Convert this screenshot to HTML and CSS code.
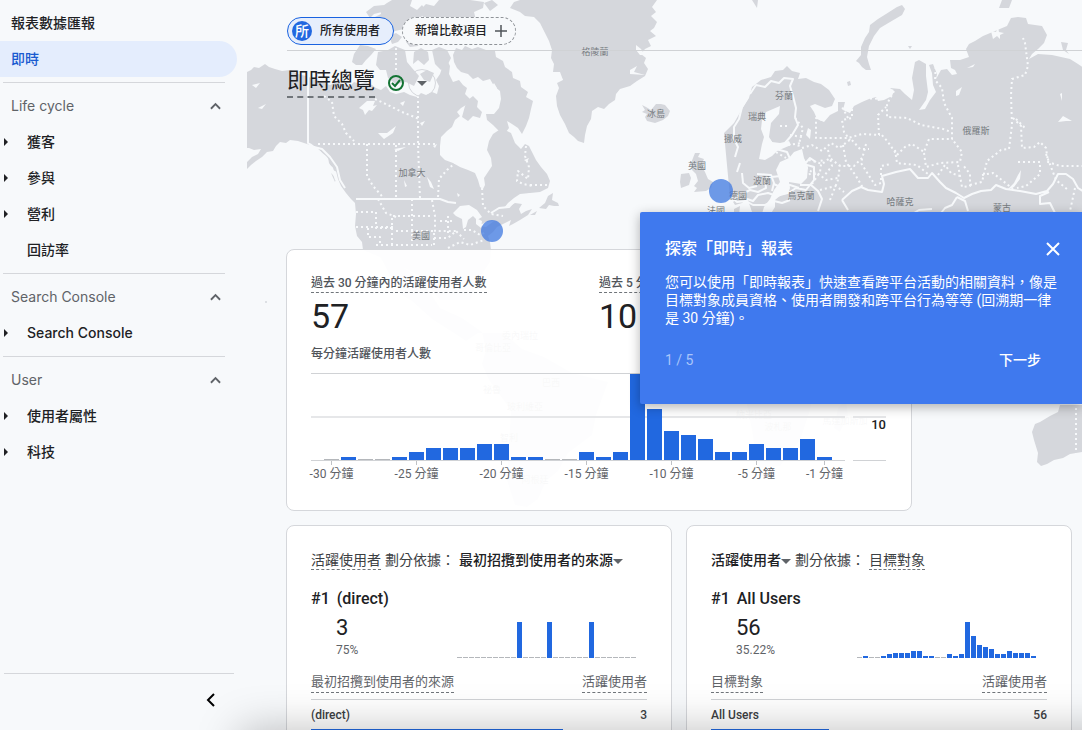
FILE: index.html
```html
<!DOCTYPE html>
<html lang="zh-Hant">
<head>
<meta charset="utf-8">
<meta name="viewport" content="width=device-width, initial-scale=1">
<title>即時總覽</title>
<link rel="stylesheet" href="styles.css">
</head>
<body>
<div class="app">
  <nav class="sidebar" aria-label="報表">
    <a class="nav-item" href="#snapshot">報表數據匯報</a>
    <a class="nav-item nav-item--active" href="#realtime" aria-current="page">即時</a>
    <section class="nav-group">
      <button class="nav-head" type="button">Life cycle <svg class="chevron" viewBox="0 0 12 8"><path d="M1 7 6 2l5 5"/></svg></button>
      <a class="nav-item nav-item--sub" href="#acquisition"><span class="arrow"></span>獲客</a>
      <a class="nav-item nav-item--sub" href="#engagement"><span class="arrow"></span>參與</a>
      <a class="nav-item nav-item--sub" href="#monetization"><span class="arrow"></span>營利</a>
      <a class="nav-item nav-item--sub" href="#retention">回訪率</a>
    </section>
    <section class="nav-group">
      <button class="nav-head" type="button">Search Console <svg class="chevron" viewBox="0 0 12 8"><path d="M1 7 6 2l5 5"/></svg></button>
      <a class="nav-item nav-item--sub" href="#search"><span class="arrow"></span>Search Console</a>
    </section>
    <section class="nav-group">
      <button class="nav-head" type="button">User <svg class="chevron" viewBox="0 0 12 8"><path d="M1 7 6 2l5 5"/></svg></button>
      <a class="nav-item nav-item--sub" href="#attributes"><span class="arrow"></span>使用者屬性</a>
      <a class="nav-item nav-item--sub" href="#tech"><span class="arrow"></span>科技</a>
    </section>
    <div class="nav-foot">
      <button class="collapse" type="button" aria-label="收合"><svg viewBox="0 0 10 14"><path d="M8 1 2 7l6 6"/></svg></button>
    </div>
  </nav>

  <main class="main">
    <svg class="map" viewBox="247 0 835 730" preserveAspectRatio="xMinYMin slice" aria-label="地圖">
      <g class="land">
        <!-- North America -->
        <path d="M247 72L251 70 254 67 259 68 262 66 265 64 269 67 275 69 282 71 290 70 298 74 306 76 314 79 322 82 330 85 337 82 343 84 350 86 354 82 360 84 366 82 372 85 376 88 381 90 386 86 390 92 396 94 404 92 410 95 417 97 421 93 426 95 432 92 437 94 439 86 436 80 440 74 443 65 446 58 450 66 449 74 453 82 459 80 463 85 467 88 465 94 470 99 466 105 461 108 457 112 460 116 455 120 452 127 447 131 441 137 440 146 440 155 445 160 453 163 460 167 468 170 475 173 478 180 480 187 483 189 485 185 484 178 488 172 492 166 491 158 487 150 489 141 493 134 499 130 505 130 511 133 513 138 515 143 518 146 521 149 525 144 529 146 532 152 536 160 541 167 547 174 550 181 548 188 540 192 530 193 520 194 514 198 508 203 504 208 510 206 515 203 522 204 519 209 521 214 526 211 532 209 528 215 520 220 513 224 509 226 511 220 505 223 497 227 493 232 488 236 490 242 491 250 490 262 478 280 470 300 440 300 420 276 392 262 363 250 362 242 357 236 355 226 356 214 355 203 351 199 346 193 341 186 338 179 336 171 331 162 326 156 320 151 314 146 307 144 298 141 290 140 286 143 280 142 276 146 273 151 267 152 262 157 256 161 251 165 247 169 247 162 252 157 258 154 261 149 254 150 249 148 247 148z"/>
        <path d="M346 190L354 196 358 200 354 201 349 196zM328 157L333 164 337 172 333 170 329 163zM331 173L336 178 335 182z"/>
        <!-- Arctic islands -->
        <path d="M360 45L368 46 376 49 371 55 366 60 362 65 356 65 352 62 354 54z"/>
        <path d="M376 65L378 52 388 50 395 46 405 50 407 62 412 68 419 76 414 86 406 82 396 84 388 78 386 70 380 70z"/>
        <path d="M362 28L368 24 373 18 381 14 380 8 387 3 392 0H412L410 6 417 10 422 5 426 11 421 17 422 24 414 27 407 23 404 29 395 31 389 35 382 32 375 34 368 36 360 34z"/>
        <path d="M366 12L374 6 384 5 382 12 374 14 370 18zM389 36L396 33 402 37 398 42 392 44zM378 38L385 37 387 42 380 45z"/>
        <path d="M414 52L421 48 428 52 429 60 424 65 418 60 413 64zM406 42L414 36 420 40 418 46 410 47z"/>
        <path d="M432 50L439 47 447 50 451 58 447 66 441 70 435 64zM420 74L427 70 434 73 430 82 424 80z"/>
        <path d="M418 12L426 4 434 6 439 0H470L484 2 483 8 474 12 476 20 466 25 458 22 450 29 441 25 434 27 429 22zM484 3L492 0 498 5 490 11z"/>
        <path d="M430 34L445 30 458 32 470 29 483 34 489 39 475 42 460 40 448 42 436 40z"/>
        <path d="M453 55L456 48 462 50 465 46 472 49 478 47 486 50 495 51 496 57 503 61 505 67 512 72 513 78 520 81 521 87 528 92 526 97 533 101 531 109 529 118 526 126 522 134 518 128 512 124 507 121 509 128 506 132 499 131 493 125 487 120 486 114 494 114 499 108 501 99 500 91 494 86 490 79 483 81 478 77 473 79 468 74 461 72 457 68 454 62z"/>
        <path d="M465 106L468 100 473 96 478 101 477 107 482 112 480 118 473 116 468 121 462 117z"/>
        <path d="M510 8L514 2 520 0H657L652 7 656 12 651 16 657 22 654 28 650 31 656 36 648 40 651 46 645 49 641 54 646 58 644 63 648 69 645 76 637 81 630 86 620 89 616 94 615 100 609 104 604 109 598 107 592 111 591 119 587 126 585 135 584 143 578 141 574 137 569 133 565 124 560 115 557 106 556 96 559 88 557 83 563 80 560 72 553 72 554 64 551 58 552 50 549 41 545 33 540 23 534 17 525 16 520 12z"/>
        <path d="M539 208L545 203 548 196 553 193 552 200 558 203 559 206 554 206 549 205 546 209zM530 215L537 211 535 215z"/>
        <!-- Europe and Asia -->
        <path d="M642 105l4 2 5 3 5-6 5 0 4 1 5 6-2 5-5 4-8 3-8-2-2-4 2-3-5-2 3-2z"/>
        <path d="M695 153h5l-2 4 6 2-3 6 4 7 3 7 5 3-2 6-5 3-12 1 3-4-3-2 4-5-2-7-4-4-1-7z"/>
        <path d="M681 174l8-1 2 5-2 7-8 3-1-6z"/>
        <path d="M724 133l10-10 8-14 7-11 3-11 9-7 10-3 4-6 8-1 4-4 5 5 8 2-2 6 8-1 8 4 7 2 8 6 6 9-3 7-7 2-10-4-5 2 4 6 3 7 7 3 6-7 8-4 0-9 7 0-2 8 7 3 4-7 8-4 7-3 7-2 2 4 6-1 8-4 2-5-4-3 10 1 5 5 7 6 2-10-2-12 3-16 4-2 7 4 0 12 2 16-2 8-7 10 6-1 5-9 6-8-3-7-1-12-3-8 4-1 4 10-1 5 5-9 6-1 5 6 5-1-2-4-4-2-1-8h10l9-3-3-8 3-5 6-3 8-5 12-5 12-5 4-8 7-1 8 1 2 6 14 2 5 9-3 8-6 6-6 5-3 5 9-5 14 1 18 4 8 5 6 4 5 7 5 6v180H697l1-7-3-4 12-2 1-5 8-1 8-10 5-6 5-2 0-15 6-3-1 9 5 5 10-2 9-2 7-1 5-8 0-7 6-5 7-1 2-6-1-6 12 2 6-6 1-11-4-9-2-9-8 3-5 6-9 4-4 8 4 12-6 8-4 9-6 8-3 10-7 1-4-12-3-8-5 5-7 2-5-8z"/>
        <path class="sea" d="M773 109l7-3-1 8-8 9-2 14 3 5 8 1 9-2 2 4-14 6-5 5-7 4-6-1 3-15 2-7-3-8 1-9 4-8z"/>
        <path d="M1002 0h10l-3 8h-10z"/>
        <path d="M897 7L902 5 905 9 902 15 890 22 880 28 874 36 869 46 867 57 869 64 871 70 866 70 862 67 859 63 856 61 861 55 861 47 865 38 869 32 870 25 878 19 886 14z"/>
        <path d="M752 0h6l-1 8zM847 82l3-1 1 4-3 1zM908 46l4 0-2 3zM1061 42L1068 43 1066 50 1069 54 1063 50z"/>
        <path d="M1082 405H1060L1058 412 1050 416 1040 422 1035 424 1032 432 1034 440 1038 453 1037 462 1041 466 1047 464 1054 460 1063 458 1070 454 1082 452z"/>
        <!-- South America and Africa, under the card -->
        <path d="M376 249L390 275 402 295 412 301 432 319 454 333 466 341 478 333 504 333 522 349 544 357 572 373 608 382 596 415 592 435 568 453 558 471 546 481 538 499 527 507 515 505 507 480 509 445 511 410 489 380 482 364 486 350 482 332 462 318 440 308 422 280z"/>
        <path d="M740 330L830 330 818 370 810 410 800 440 780 466 758 468 752 430 744 390z"/>
        <path d="M838 408l8-8 2 16-8 16-6-4z"/>
      </g>
      <!-- Lakes and inlets -->
      <g class="sea">
        <path d="M359 108l8-7 8 0-2 5 4-1-5 6-3-1-4 5-2-5zM378 133l9 0 9-7-3 7-9 6zM453 213l7-7 9-1 8 5 5 7-5 3-4-4-5 4-2 7-3 2-1-10-6-3zM476 218l6 3-1 7-5-4zM427 177l4 5 3 7-4-2zM488 92l6-9 3 5-1 8-8 3zM394 149l12-2-8 4zM478 226l8-4 8-1-8 6zM386 84l7-1 5 4-8 2zM956 91l6-4-3 8-3 1z"/>
        <path d="M252 85L260 83 256 88zM258 108L266 104 262 109zM420 123L425 121 422 126zM400 103L405 101 403 106zM433 146L437 144 435 148zM524 160L529 158 527 162zM404 180L407 186 405 187zM457 193L460 195 458 197zM636 45L641 49 645 55 640 55 636 50zM630 70L637 66 634 72 645 75 630 74zM553 72L560 75 563 80 555 77z"/>
        <path d="M991 31l5 1 2-5 1 5 5 1-4 2 0 4-3-3-4 3zM1018 175l3-5-1 9-6 8-7 3 7-7zM1060 94l2-1 0 8zM1063 116l9 5-6 0-8 1zM808 128l3 2-1 9-4-4zM967 68l8-4-2 3zM765 145l5-6 3 4-5 6z"/>
      </g>
      <g class="border">
        <path d="M308 74v69l6 4 8 2 8 8 7 10 3 13 5 8M356 199h84l8 3 8 1M491 213l8-5 10-1 8-9 14-4M310 144l10 8 5 10 7 6 4 12"/>
        <path d="M748 97l-6 10-3 12-5 8 0 12 4 8-3 10M750 94l6-9 9 2 6-6 8 2 5-5 9 1-3 7 3 10 3 12-1 9 3 8-6 10-7 8M740 163l-3 9M776 149l11 3 4 9 8 4-1 9-10 6-7-4-10 1-6 2 1 9-8 4-8-2-6 3-8 4-5 6M792 160l10-2 5 7 7 2 0 13-8 10-10-2-6 4-13 4-9-3-10 2-5 6-6-2M742 173l1 10 6 5 8-2M757 174l14 1 3 8-2 8M774 184l6 3 10-2 9 3M803 166l7-8 6 4M713 199l5-3 6 5 7-4 6 5 9-1 7 4 12 0 9-4 8 2 8-3"/>
        <path d="M800 185l11 0 7 6 4 8-4 12M842 200l10-9 9-4 7 3 14 2 2-8-2-8 14-4 14-3 8 9 10 0 4-5 8 9 6 6 10 5 8 5 8-4 9-3 10-1 5-5 10 4 14 2 16 3 11-3 6-7 5-10 8 0 7 5 5 9 8 5M842 200l6 10M957 197l-5 8-7 3-4 5M957 197l8 4 3 10M1049 192l-9 4 0 8 10-1 5 10M932 209l-13 1-5 3"/>
      </g>
      <g class="border border--dotted">
        <path d="M324 96l8 6 2 14 8 8 4 9 8 8M318 144h120M367 144v32l6 10 8 9 3 4M396 145v53M418 91v54l2 53M375 99l15 7 12 6 10 4 7 3M396 48v24M438 197l1-18 8-9 8-7M482 188l1 18 8 8 12 2M526 146l-1 10 4 11-1 12-10-8-1 10 6 3 10 2M378 199l8 14 10 4M356 212h20v16h16v-12h40M368 228v9h12v8M392 228v20M412 199v45M432 200l3 16 0 15h22M356 227h40M396 231h38v14M440 221h14M434 238l14 0 8-7 8 8M376 245h56M448 216v18M464 230l8 0 8 5 6-3M448 248l12-6 10 3 14-5"/>
        <path d="M848 118l-7-13M852 104l8-6 24 1 8-8 2-8M894 91l-7 13 0 13 20 1 14 7 22 4 8 3M936 62l-1 18 7 8 2 15 8 15 0 21h-23l-5 13-12-8-7 3-8 8-9-13-8-9M879 135l-1-20 8-8M852 104l0 14-10 2 2 12 6 8M822 120l-6-2 0 20 32 0 14-4 18 1M802 148l10-3 10 6 9-8 8 5 12-9 9 10 9 0M800 165l10-5 12 4 8-6 10 8 14 0 8-8M843 145l3 17 10 14 7 12M866 144l-5 19 14 22 6-2 0-17 10-2M895 150l2 13 20 2 11 9M924 153l2 14 14-4 20-1 2-10-10-13M938 175l7-10 6 8 12 4M958 165l4 22 8-1 0-12-7-9M970 185l12-3 5-21 14-11 8-1 3-24-1-30 1-16 13-4 3-9-3-23-2-5M1013 118l8 8 1 22 12-1 6-5 6 6 2 14 12 4h22M1016 119l10 10M982 175l11-2 10 8 10 8M1018 162h22v12l-14 12-9 2M1046 154l10 26 12 10M1075 188l-5 23M804 176l12-4 10 8 12-2M812 184l8-12 2-14M820 190l16-4 8 6M830 200l8-20 2-16M800 154l6 14 12 8M828 150l4 16-8 10M776 152l10 6M780 126l10 0M788 145l14-2M790 135l12 2M795 118l8 10-5 20M1076 408v48M530 185h18"/>
      </g>
      <g class="place">
        <text x="595" y="55">格陵蘭</text><text x="656" y="117">冰島</text><text x="784" y="99">芬蘭</text>
        <text x="757" y="120">瑞典</text><text x="733" y="142">挪威</text><text x="697" y="169">英國</text>
        <text x="738" y="199">德國</text><text x="762" y="184">波蘭</text><text x="801" y="199">烏克蘭</text>
        <text x="716" y="214">法國</text><text x="976" y="134">俄羅斯</text><text x="900" y="205">哈薩克</text>
        <text x="1002" y="211">蒙古</text><text x="412" y="176">加拿大</text><text x="421" y="239">美國</text>
        <text x="520" y="339">委內瑞拉</text><text x="493" y="351">哥倫比亞</text><text x="551" y="386">巴西</text>
        <text x="492" y="393">祕魯</text><text x="525" y="410">玻利維亞</text><text x="509" y="441">智利</text>
        <text x="535" y="483">阿根廷</text><text x="754" y="418">納米比亞</text><text x="778" y="430">波札那</text>
        <text x="845" y="424">馬達加斯加</text>
      </g>
      <g class="pins"><circle cx="492" cy="231" r="11"/><circle cx="721" cy="191" r="12"/></g>
      <circle class="land" cx="266" cy="302" r="1"/>
    </svg>

    <div class="content">
      <div class="chips">
        <button class="chip chip--active" type="button"><span class="chip-mark">所</span>所有使用者</button>
        <button class="chip chip--add" type="button">新增比較項目 <svg viewBox="0 0 12 12"><path d="M6 0v12M0 6h12"/></svg></button>
      </div>
      <header class="title-row">
        <h1 class="title">即時總覽</h1>
        <svg class="status" viewBox="0 0 18 18"><circle cx="9" cy="9" r="7"/><path d="m5 9 3 3 5-6"/></svg>
        <button class="title-menu" type="button" aria-label="選單"><span class="caret"></span></button>
      </header>

      <section class="card card--overview">
        <div class="metrics">
          <div><h2 class="metric-label dashed">過去 30 分鐘內的活躍使用者人數</h2><p class="metric-value">57</p></div>
          <div><h2 class="metric-label dashed">過去 5 分鐘內的活躍使用者人數</h2><p class="metric-value">10</p></div>
        </div>
        <h3 class="chart-title">每分鐘活躍使用者人數</h3>
        <div class="chart">
          <div class="plot bars" data-values="0,3,0,0,3,8,12,12,12,16,16,3,3,0,0,8,3,8,86,51,29,25,21,8,8,16,12,12,21,3"></div>
          <div class="scale"><span>10</span></div>
          <div class="ticks">
            <span class="tick tick--30">-30 分鐘</span><span class="tick tick--25">-25 分鐘</span><span class="tick tick--20">-20 分鐘</span><span class="tick tick--15">-15 分鐘</span><span class="tick tick--10">-10 分鐘</span><span class="tick tick--5">-5 分鐘</span><span class="tick tick--1">-1 分鐘</span>
          </div>
        </div>
      </section>

      <div class="card-row">
        <section class="card">
          <h2 class="card-title"><span class="dashed">活躍使用者</span><span class="by">劃分依據：</span><button class="picker" type="button">最初招攬到使用者的來源<span class="caret"></span></button></h2>
          <div class="top">
            <div><p class="top-name"><span>#1</span>(direct)</p><p class="top-value">3</p><p class="top-share">75%</p></div>
            <div class="spark bars" data-values="0,0,0,0,0,0,0,0,0,0,36,0,0,0,0,36,0,0,0,0,0,0,36,0,0,0,0,0,0,0"></div>
          </div>
          <table class="table">
            <thead><tr><th><span class="dashed">最初招攬到使用者的來源</span></th><th><span class="dashed">活躍使用者</span></th></tr></thead>
            <tbody><tr><td>(direct)</td><td>3</td></tr></tbody>
          </table>
          <div class="share" style="width:75%"></div>
        </section>
        <section class="card">
          <h2 class="card-title"><button class="picker" type="button">活躍使用者<span class="caret"></span></button><span class="by">劃分依據：</span><span class="dashed">目標對象</span></h2>
          <div class="top">
            <div><p class="top-name"><span>#1</span>All Users</p><p class="top-value">56</p><p class="top-share">35.22%</p></div>
            <div class="spark bars" data-values="0,2,0,0,2,4,5,5,5,7,7,2,2,0,0,4,2,4,36,22,13,11,9,4,4,7,5,5,5,2"></div>
          </div>
          <table class="table">
            <thead><tr><th><span class="dashed">目標對象</span></th><th><span class="dashed">活躍使用者</span></th></tr></thead>
            <tbody><tr><td>All Users</td><td>56</td></tr></tbody>
          </table>
          <div class="share" style="width:35.22%"></div>
        </section>
      </div>
    </div>
  </main>

  <aside class="tour" role="dialog" aria-labelledby="tour-title">
    <header class="tour-head">
      <h2 id="tour-title">探索「即時」報表</h2>
      <button type="button" aria-label="關閉"><svg viewBox="0 0 14 14"><path d="m1 1 12 12M13 1 1 13"/></svg></button>
    </header>
    <p class="tour-text">您可以使用「即時報表」快速查看跨平台活動的相關資料，像是目標對象成員資格、使用者開發和跨平台行為等等 (回溯期一律是 30 分鐘)。</p>
    <footer class="tour-foot"><span>1 / 5</span><button type="button">下一步</button></footer>
  </aside>
  <div class="edge-shadow"></div>
</div>
<script src="charts.js"></script>
</body>
</html>
```

FILE: styles.css
```css
* { box-sizing: border-box; }
body {
  margin: 0;
  height: 100vh;
  overflow: hidden;
  background: #f7f9fb;
  color: #202124;
  font: 14px/20px Roboto, "Noto Sans CJK TC", sans-serif;
}
h1, h2, h3, p { margin: 0; font-weight: 400; }
button { margin: 0; padding: 0; border: 0; background: none; color: inherit; font: inherit; cursor: pointer; }
a { color: inherit; text-decoration: none; }
svg { fill: none; stroke: currentColor; }

.app { position: relative; display: flex; height: 100%; overflow: hidden; }

/* Sidebar */
.sidebar {
  display: flex;
  flex-direction: column;
  flex: 0 0 247px;
  padding-top: 5px;
  font-family: Inter, "Noto Sans CJK TC", sans-serif;
}
.nav-item, .nav-head { display: flex; align-items: center; height: 36px; padding-left: 11px; }
.nav-item { font-weight: 500; }
.nav-item--active { margin-right: 10px; border-radius: 0 18px 18px 0; background: #e4edfd; color: #1a5bd0; }
.nav-item--sub { position: relative; padding-left: 27px; }
.nav-group { margin: 5px 22px 0 3px; padding-top: 5px; border-top: 1px solid #d5d7db; }
.nav-group .nav-head { width: 100%; justify-content: space-between; padding: 0 4px 0 8px; color: #5f6368; }
.nav-group .nav-item--sub { padding-left: 24px; }
.chevron { width: 11px; height: 8px; stroke-width: 2; }
.arrow {
  position: absolute;
  left: 1px;
  border: 4px solid transparent;
  border-left-color: #202124;
  border-right-width: 0;
}
.nav-foot { display: flex; justify-content: flex-end; align-items: center; height: 57px; margin: auto 13px 0 4px; padding-right: 18px; padding-bottom: 4px; border-top: 1px solid #d5d7db; }
.collapse { width: 10px; height: 14px; color: #000; }
.collapse svg { display: block; width: 10px; height: 14px; stroke-width: 2; }

/* Map */
.main { position: relative; flex: 1; min-width: 0; }
.map { position: absolute; top: 0; left: 0; width: 100%; height: 730px; stroke: none; }
.land { fill: #d5d7dc; }
.sea { fill: #f7f9fb; }
.border { fill: none; stroke: #f7f9fb; }
.border path { stroke-width: 2px; stroke-linejoin: round; }
.border--dotted path { stroke-dasharray: 2 3; }
.place { fill: #757b80; font-size: 9px; text-anchor: middle; }
.pins { fill: #3f78e0; fill-opacity: .75; }

/* Header */
.content { position: relative; padding: 17px 10px 0 39px; }
.chips { display: flex; gap: 8px; margin: 0 -10px 0 1px; padding-bottom: 5px; border-bottom: 1px solid #d0d2d5; }
.chip { display: flex; align-items: center; height: 28px; border-radius: 14px; font-size: 12px; font-weight: 500; }
.chip--active { gap: 8px; padding: 0 13px 0 4px; border: 1px solid #1a63e0; background: #e6eefc; }
.chip-mark { width: 20px; border-radius: 10px; background: #2168e0; color: #fff; font-size: 14px; text-align: center; }
.chip--add { gap: 8px; padding: 0 8px 0 12px; border: 1px dashed #8f9398; background: #f7f9fb; }
.chip--add svg { width: 12px; height: 12px; stroke: #50545a; stroke-width: 1.5; }
.title-row { display: flex; align-items: center; height: 48px; margin: 8px 0 0 1px; gap: 12px; }
.title { height: 30px; border-bottom: 2px dashed #70757a; font-size: 22px; line-height: 26px; }
.status { width: 18px; height: 18px; stroke: #137333; stroke-width: 2; }
.title-menu { display: flex; align-items: center; justify-content: center; width: 28px; height: 28px; border: 1px solid #d5d7dc; border-radius: 14px; margin-left: -9px; }
.caret { display: inline-block; border: 5px solid transparent; border-top-color: #5f6368; border-bottom-width: 0; vertical-align: middle; }

/* Cards */
.card { padding: 24px; border: 1px solid #d5d7db; border-radius: 8px; background: #fff; }
.card--overview { max-width: 626px; min-height: 262px; margin-top: 142px; background: rgba(255, 255, 255, .95); }
.dashed { border-bottom: 1px dashed #70757a; }
.metrics { display: grid; grid-template-columns: 1fr 1fr; }
.metric-label { width: fit-content; color: #50545a; font-size: 12px; font-weight: 500; line-height: 18px; white-space: nowrap; }
.metric-value { padding-top: 1px; font-size: 34px; line-height: 44px; }
.chart-title { padding-top: 6px; color: #50545a; font-size: 12px; font-weight: 500; }
.chart { display: grid; grid-template-columns: 1fr 33px; column-gap: 8px; padding: 9px 1px 0 0; }
.bars { display: flex; align-items: flex-end; }
.bars i { flex: 1; background: #2168e0; }
.bars .zero { background: #b4b7bb; }
.plot {
  gap: 2px;
  height: 88px;
  padding: 0 13px;
  border: solid #d0d2d5;
  border-width: 1px 0;
  background: linear-gradient(#e6e7e9, #e6e7e9) 0 42px / 100% 2px no-repeat;
}
.scale { border-bottom: 1px solid #d0d2d5; background: linear-gradient(#e6e7e9, #e6e7e9) 0 43px / 100% 2px no-repeat; padding-top: 42px; text-align: right; font-size: 13px; font-weight: 500; }
.ticks { display: grid; grid-template-columns: repeat(30, minmax(0, 1fr)); column-gap: 2px; padding: 0 13px; color: #5f6368; font-size: 12px; }
.tick { display: grid; grid-row: 1; justify-self: center; justify-items: center; white-space: nowrap; line-height: 18px; }
.tick::before { content: ""; width: 1px; height: 4px; background: #c0c2c6; }
.tick--30 { grid-column: 1; }
.tick--25 { grid-column: 6; }
.tick--20 { grid-column: 11; }
.tick--15 { grid-column: 16; }
.tick--10 { grid-column: 21; }
.tick--5 { grid-column: 26; }
.tick--1 { grid-column: 30; }

.card-row { display: grid; grid-template-columns: 1fr 1fr; gap: 14px; margin-top: 14px; }
.card-title { display: flex; align-items: center; height: 20px; color: #3c4043; font-size: 14px; white-space: nowrap; }
.card-title .dashed { height: 20px; }
.by { margin: 0 4px; }
.picker { color: #202124; font-weight: 500; }
.top { display: flex; justify-content: space-between; padding: 17px 11px 0 0; }
.top-name { display: flex; gap: 7px; font: 500 16px/24px Roboto, sans-serif; }
.top-value { padding: 3px 0 0 25px; font-size: 22px; line-height: 28px; }
.top-share { padding-left: 25px; color: #5f6368; font-size: 12px; line-height: 16px; }
.spark { gap: 1px; width: 179px; height: 36px; margin-top: 35px; }
.table { width: 100%; margin-top: 14px; border-collapse: collapse; font-size: 13px; }
.table th { padding: 0 0 6px; border-bottom: 1px solid #d0d2d5; color: #5f6368; font-weight: 400; text-align: left; }
.table th .dashed { display: inline-block; line-height: 20px; vertical-align: top; }
.table td { padding: 5px 0 4px; color: #3c4043; font-size: 12px; font-weight: 500; }
.table th:last-child, .table td:last-child { text-align: right; }
.share { height: 3px; background: #2168e0; }

/* Tour dialog */
.tour {
  position: absolute;
  top: 212px;
  right: 0;
  width: 442px;
  padding: 25px 22px 34px 25px;
  border-radius: 2px 0 0 2px;
  background: #3f79ee;
  box-shadow: 0 3px 12px rgba(0, 0, 0, .3);
  color: #fff;
}
.tour-head { display: flex; justify-content: space-between; align-items: center; }
.tour-head h2 { font-size: 16px; font-weight: 500; line-height: 24px; }
.tour-head svg { display: block; width: 14px; height: 14px; stroke-width: 2; }
.tour-text { padding-top: 12px; line-height: 18px; }
.tour-foot { display: flex; justify-content: space-between; padding: 23px 19px 0 0; }
.tour-foot span { color: #a9c5fa; }
.tour-foot button { font-weight: 500; }

.edge-shadow { position: absolute; top: 100%; left: 240px; right: -60px; height: 60px; box-shadow: 0 0 44px rgba(0, 0, 0, .26); }
```

FILE: charts.js
```js
document.querySelectorAll(".bars").forEach(function (chart) {
  chart.dataset.values.split(",").forEach(function (value) {
    var bar = document.createElement("i");
    var height = Number(value);
    bar.style.height = (height || 1) + "px";
    if (!height) bar.className = "zero";
    chart.appendChild(bar);
  });
});
```
